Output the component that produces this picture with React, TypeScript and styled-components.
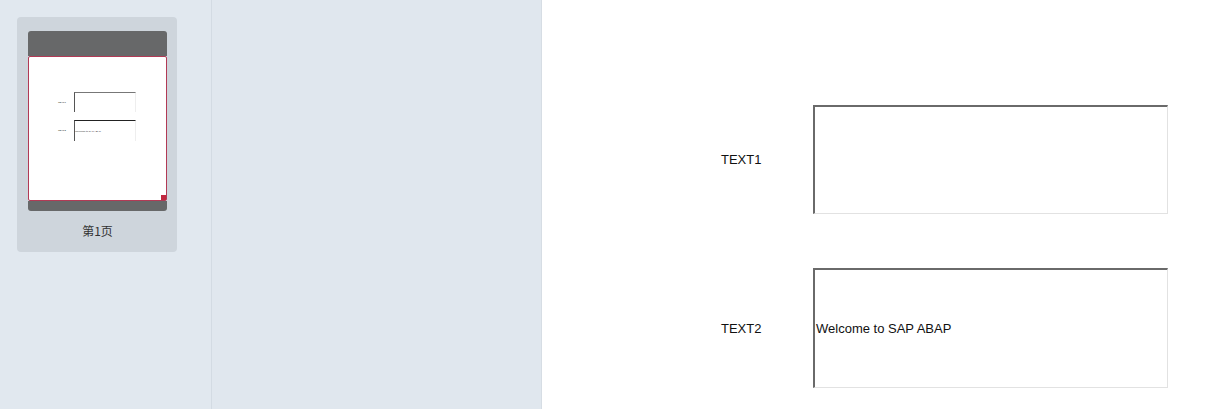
import styled, { createGlobalStyle } from 'styled-components';

const GlobalStyle = createGlobalStyle`
  html, body {
    margin: 0;
    padding: 0;
    height: 100%;
    background: #e1e8ef;
  }
  body {
    font-family: 'Liberation Sans', Arial, sans-serif;
  }
`;

const Layout = styled.div`
  display: flex;
  width: 100%;
  height: 100vh;
  overflow: hidden;
`;

const Sidebar = styled.aside`
  width: 212px;
  flex-shrink: 0;
  padding: 17px;
  box-sizing: border-box;
  background: #e1e8ef;
  border-right: 1px solid #d3dbe3;
`;

const Middle = styled.div`
  width: 329px;
  flex-shrink: 0;
  background: #e0e7ee;
  border-right: 1px solid #d6dde4;
`;

const Canvas = styled.main`
  flex: 1;
  background: #ffffff;
  padding: 105px 0 0 179px;
  box-sizing: border-box;
  display: flex;
  flex-direction: column;
  gap: 54px;
`;

const PageCard = styled.div`
  width: 160px;
  height: 235px;
  box-sizing: border-box;
  padding: 14px 10px 0 11px;
  background: #ced5dc;
  border-radius: 4px;
  display: flex;
  flex-direction: column;
`;

const PageBar = styled.div<{ $height: number; $top?: boolean }>`
  height: ${(p) => p.$height}px;
  background: #676869;
  border-radius: ${(p) => (p.$top ? '3px 3px 0 0' : '0 0 3px 3px')};
`;

const PageBody = styled.div`
  position: relative;
  height: 145px;
  box-sizing: border-box;
  background: #ffffff;
  border: 1px solid #b23a55;
  border-radius: 2px;
  padding: 35px 0 0 29px;
  display: flex;
  flex-direction: column;
  gap: 8px;
`;

const Handle = styled.span`
  position: absolute;
  right: 0;
  bottom: 0;
  width: 5px;
  height: 5px;
  background: #c1273f;
`;

const MiniRow = styled.div<{ $height: number }>`
  display: flex;
  align-items: center;
  height: ${(p) => p.$height}px;
`;

const MiniLabel = styled.span`
  width: 16px;
  font-size: 2.5px;
  color: #222;
`;

const MiniBox = styled.div<{ $dark?: boolean }>`
  width: 62px;
  height: 100%;
  box-sizing: border-box;
  border-top: 1px solid ${(p) => (p.$dark ? '#222' : '#777')};
  border-left: 1px solid #555;
  border-right: 1px solid #eee;
  display: flex;
  align-items: center;
  font-size: 2.5px;
  color: #222;
`;

const Caption = styled.div`
  flex: 1;
  display: flex;
  align-items: center;
  justify-content: center;
  padding-bottom: 2px;
  font-family: 'Noto Sans CJK SC', 'Noto Sans', sans-serif;
  font-size: 12px;
  color: #333;
`;

const FieldRow = styled.div`
  display: flex;
  align-items: center;
`;

const FieldLabel = styled.span`
  width: 92px;
  font-size: 13px;
  color: #111;
`;

const FieldBox = styled.div<{ $height: number }>`
  width: 355px;
  height: ${(p) => p.$height}px;
  box-sizing: border-box;
  border-style: solid;
  border-width: 2px 1px 1px 2px;
  border-color: #6a6a6a #e2e2e2 #e2e2e2 #6a6a6a;
  padding-left: 1px;
  display: flex;
  align-items: center;
  font-size: 13px;
  color: #111;
`;

const fields = [
  { label: 'TEXT1', value: '', height: 109 },
  { label: 'TEXT2', value: 'Welcome to SAP ABAP', height: 120 },
];

export default function App() {
  return (
    <>
      <GlobalStyle />
      <Layout>
        <Sidebar>
          <PageCard>
            <PageBar $height={25} $top />
            <PageBody>
              <MiniRow $height={20}>
                <MiniLabel>TEXT1</MiniLabel>
                <MiniBox />
              </MiniRow>
              <MiniRow $height={21}>
                <MiniLabel>TEXT2</MiniLabel>
                <MiniBox $dark>Welcome to SAP ABAP</MiniBox>
              </MiniRow>
              <Handle />
            </PageBody>
            <PageBar $height={10} />
            <Caption>第1页</Caption>
          </PageCard>
        </Sidebar>
        <Middle />
        <Canvas>
          {fields.map((f) => (
            <FieldRow key={f.label}>
              <FieldLabel>{f.label}</FieldLabel>
              <FieldBox $height={f.height}>{f.value}</FieldBox>
            </FieldRow>
          ))}
        </Canvas>
      </Layout>
    </>
  );
}
